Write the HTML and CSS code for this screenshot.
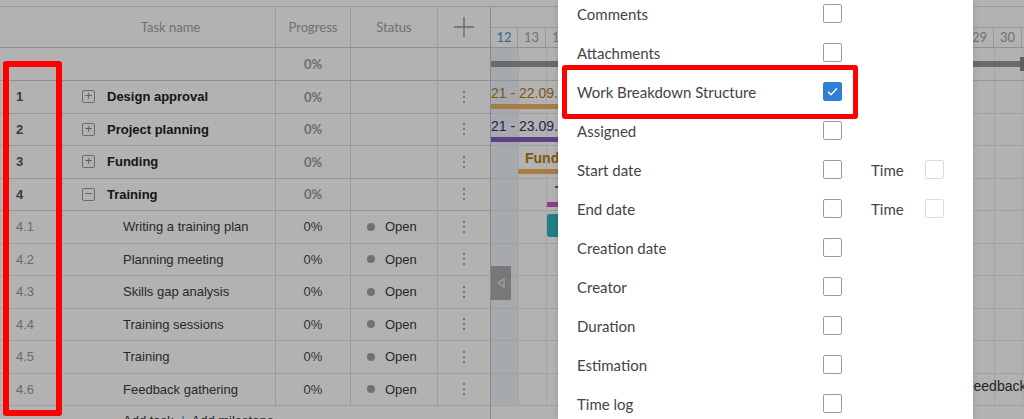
FILE: index.html
```html
<!DOCTYPE html>
<html>
<head>
    <title>Project - Gantt</title>
    <link rel="stylesheet" href="styles.css">
</head>
<body>
<div class="app">
    <div class="toolbar"></div>
    <div class="workspace">
        <div class="grid">
            <div class="row head">
                <div></div>
                <div class="cell name-head">Task name</div>
                <div class="cell col">Progress</div>
                <div class="cell col">Status</div>
                <div class="cell col add">
                    <svg width="22" height="22" viewBox="0 0 22 22"><path d="M11 1v20M1 11h20" stroke="#9a9a9a" stroke-width="1.4"/></svg>
                </div>
            </div>
            <div class="row summary">
                <div></div>
                <div></div>
                <div class="cell col pct strong">0%</div>
                <div class="cell col"></div>
                <div class="cell col"></div>
            </div>

            <div class="row parent">
                <div class="cell num">1</div>
                <div class="cell name"><span class="toggle">+</span>Design approval</div>
                <div class="cell col pct strong">0%</div>
                <div class="cell col"></div>
                <div class="cell col more"><i></i><i></i><i></i></div>
            </div>
            <div class="row parent">
                <div class="cell num">2</div>
                <div class="cell name"><span class="toggle">+</span>Project planning</div>
                <div class="cell col pct strong">0%</div>
                <div class="cell col"></div>
                <div class="cell col more"><i></i><i></i><i></i></div>
            </div>
            <div class="row parent">
                <div class="cell num">3</div>
                <div class="cell name"><span class="toggle">+</span>Funding</div>
                <div class="cell col pct strong">0%</div>
                <div class="cell col"></div>
                <div class="cell col more"><i></i><i></i><i></i></div>
            </div>
            <div class="row parent">
                <div class="cell num">4</div>
                <div class="cell name"><span class="toggle">&minus;</span>Training</div>
                <div class="cell col pct strong">0%</div>
                <div class="cell col"></div>
                <div class="cell col more"><i></i><i></i><i></i></div>
            </div>
            <div class="row">
                <div class="cell num">4.1</div>
                <div class="cell name sub">Writing a training plan</div>
                <div class="cell col pct">0%</div>
                <div class="cell col status"><b></b>Open</div>
                <div class="cell col more"><i></i><i></i><i></i></div>
            </div>
            <div class="row">
                <div class="cell num">4.2</div>
                <div class="cell name sub">Planning meeting</div>
                <div class="cell col pct">0%</div>
                <div class="cell col status"><b></b>Open</div>
                <div class="cell col more"><i></i><i></i><i></i></div>
            </div>
            <div class="row">
                <div class="cell num">4.3</div>
                <div class="cell name sub">Skills gap analysis</div>
                <div class="cell col pct">0%</div>
                <div class="cell col status"><b></b>Open</div>
                <div class="cell col more"><i></i><i></i><i></i></div>
            </div>
            <div class="row">
                <div class="cell num">4.4</div>
                <div class="cell name sub">Training sessions</div>
                <div class="cell col pct">0%</div>
                <div class="cell col status"><b></b>Open</div>
                <div class="cell col more"><i></i><i></i><i></i></div>
            </div>
            <div class="row">
                <div class="cell num">4.5</div>
                <div class="cell name sub">Training</div>
                <div class="cell col pct">0%</div>
                <div class="cell col status"><b></b>Open</div>
                <div class="cell col more"><i></i><i></i><i></i></div>
            </div>
            <div class="row">
                <div class="cell num">4.6</div>
                <div class="cell name sub">Feedback gathering</div>
                <div class="cell col pct">0%</div>
                <div class="cell col status"><b></b>Open</div>
                <div class="cell col more"><i></i><i></i><i></i></div>
            </div>
            <div class="add-row">Add task <span class="sep">|</span> Add milestone</div>
        </div>

        <div class="chart">
            <div class="chart-head">
                <div class="month"></div>
                <div class="days">
                    <span class="today">12</span><span>13</span><span>14</span><span>15</span><span>16</span>
                    <span>17</span><span>18</span><span>19</span><span>20</span><span>21</span>
                    <span>22</span><span>23</span><span>24</span><span>25</span><span>26</span>
                    <span>27</span><span>28</span><span>29</span><span>30</span>
                </div>
            </div>
            <div class="chart-body">
                <div class="lane summary-lane">
                    <div class="bar project" style="left:0;width:529px"></div>
                    <div class="cap" style="left:529px"></div>
                </div>
                <div class="lane">
                    <span class="label orange-text" style="left:0">21 - 22.09.2021</span>
                    <div class="bar thin orange" style="left:0;width:120px"></div>
                </div>
                <div class="lane">
                    <span class="label navy-text" style="left:0">21 - 23.09.2021</span>
                    <div class="bar thin purple" style="left:0;width:140px"></div>
                </div>
                <div class="lane">
                    <span class="label bold orange-text" style="left:34px">Funding</span>
                    <div class="bar thin orange" style="left:27px;width:110px"></div>
                </div>
                <div class="lane">
                    <span class="label bold red-text" style="left:64px">Training</span>
                    <div class="bar thin magenta" style="left:56px;width:160px"></div>
                </div>
                <div class="lane">
                    <div class="bar task teal" style="left:56px;width:56px"></div>
                </div>
                <div class="lane"></div>
                <div class="lane"></div>
                <div class="lane"></div>
                <div class="lane"></div>
                <div class="lane">
                    <span class="label dark-text" style="left:474px">Feedback gathering</span>
                </div>
            </div>
        </div>
    </div>

    <div class="collapse">
        <svg width="8" height="10" viewBox="0 0 8 10"><path d="M7 1L1 5l6 4z" fill="none" stroke="#eee" stroke-width="1.1"/></svg>
    </div>

    <div class="dim"></div>

    <div class="panel">
        <div class="opt"><span class="opt-label">Comments</span><span class="box"></span></div>
        <div class="opt"><span class="opt-label">Attachments</span><span class="box"></span></div>
        <div class="opt"><span class="opt-label">Work Breakdown Structure</span>
            <span class="box checked">
                <svg width="19" height="19" viewBox="0 0 19 19"><path d="M5 9.8l3 3 6-6.6" fill="none" stroke="#fff" stroke-width="1.4"/></svg>
            </span>
        </div>
        <div class="opt"><span class="opt-label">Assigned</span><span class="box"></span></div>
        <div class="opt"><span class="opt-label">Start date</span><span class="box"></span><span class="time">Time</span><span class="box off"></span></div>
        <div class="opt"><span class="opt-label">End date</span><span class="box"></span><span class="time">Time</span><span class="box off"></span></div>
        <div class="opt"><span class="opt-label">Creation date</span><span class="box"></span></div>
        <div class="opt"><span class="opt-label">Creator</span><span class="box"></span></div>
        <div class="opt"><span class="opt-label">Duration</span><span class="box"></span></div>
        <div class="opt"><span class="opt-label">Estimation</span><span class="box"></span></div>
        <div class="opt"><span class="opt-label">Time log</span><span class="box"></span></div>
    </div>

    <div class="mark mark-num"></div>
    <div class="mark mark-wbs"></div>
</div>
</body>
</html>
```

FILE: styles.css
```css
* {
    box-sizing: border-box;
}

body {
    margin: 0;
    font-family: "Liberation Sans", Arial, sans-serif;
    font-size: 13px;
    color: #333;
    background-color: #fff;
}

.app {
    position: relative;
    width: 1024px;
    height: 419px;
    overflow: hidden;
}

.toolbar {
    height: 7px;
    border-bottom: 1px solid #dcdcdc;
}

.workspace {
    display: flex;
}

/* left task grid */
.grid {
    width: 491px;
    flex: none;
    border-right: 1px solid #c4c4c4;
}

.row {
    display: grid;
    grid-template-columns: 62px 213px 75px 87px 53px;
    height: 32.5px;
    border-bottom: 1px solid #e3e3e3;
}

.row.head {
    height: 41px;
    border-bottom: 1px solid #cfcfcf;
    font-family: Lato, sans-serif;
    color: #a2a2a2;
}

.row.summary {
    height: 33px;
    border-bottom: 1px solid #cfcfcf;
}

.row.parent {
    border-bottom-color: #d6d6d6;
}

.cell {
    display: flex;
    align-items: center;
    min-width: 0;
    white-space: nowrap;
}

.col {
    justify-content: center;
    border-left: 1px solid #e0e0e0;
}

.name-head {
    justify-content: center;
    padding-left: 4px;
}

.num {
    padding-left: 16px;
    color: #9a9a9a;
}

.parent .num {
    color: #555;
    font-weight: bold;
}

.name {
    padding-left: 20px;
    color: #3a3a3a;
}

.parent .name {
    font-weight: bold;
    color: #222;
}

.name.sub {
    padding-left: 61px;
}

.toggle {
    width: 13px;
    height: 13px;
    margin-right: 12px;
    border: 1px solid #9a9a9a;
    border-radius: 2px;
    color: #8a8a8a;
    font-weight: normal;
    font-size: 13px;
    line-height: 10px;
    text-align: center;
}

.pct {
    color: #4a4a4a;
}

.pct.strong {
    font-family: Lato, sans-serif;
    font-weight: bold;
    color: #9c9c9c;
}

.status {
    justify-content: flex-start;
    padding-left: 16px;
    color: #3a3a3a;
}

.status b {
    width: 8px;
    height: 8px;
    margin-right: 10px;
    border-radius: 50%;
    background-color: #a3a3a3;
}

.more {
    flex-direction: column;
    gap: 3px;
}

.more i {
    width: 2px;
    height: 2px;
    border-radius: 50%;
    background-color: #8a8a8a;
}

.add-row {
    padding: 7px 0 0 123px;
    color: #333;
}

.add-row .sep {
    color: #4a90e2;
    padding: 0 4px;
}

/* timeline */
.chart {
    flex: 1;
    min-width: 0;
    overflow: hidden;
}

.chart-head {
    height: 41px;
    border-bottom: 1px solid #cfcfcf;
}

.month {
    height: 21px;
    border-bottom: 1px solid #dcdcdc;
}

.days {
    display: flex;
    height: 19px;
    font-family: Lato, sans-serif;
    color: #a2a2a2;
}

.days span {
    flex: none;
    width: 28px;
    border-right: 1px solid #dcdcdc;
    text-align: center;
    line-height: 19px;
}

.days span:first-child {
    width: 27px;
}

.days .today {
    color: #4a8fdc;
}

.chart-body {
    background-image:
        linear-gradient(to right, #eef3f9 0, #eef3f9 27px, transparent 27px),
        repeating-linear-gradient(to right, transparent 0, transparent 27px, #ececec 27px, #ececec 28px);
}

.lane {
    position: relative;
    height: 32.5px;
    border-bottom: 1px solid #e6e6e6;
}

.summary-lane {
    height: 33px;
    border-bottom-color: #d6d6d6;
}

.bar {
    position: absolute;
}

.bar.project {
    top: 13px;
    height: 6px;
    background-color: #989898;
}

.cap {
    position: absolute;
    top: 9px;
    width: 5px;
    height: 14px;
    background-color: #8a8a8a;
}

.bar.thin {
    top: 23px;
    height: 5px;
}

.bar.task {
    top: 3px;
    height: 23px;
    border-radius: 3px;
}

.orange {
    background-color: #f1b262;
}

.purple {
    background-color: #8a5cc0;
}

.magenta {
    background-color: #c45cb5;
}

.teal {
    background-color: #33b3bf;
}

.label {
    position: absolute;
    top: 4px;
    line-height: 16px;
    font-size: 14px;
    white-space: nowrap;
}

.label.bold {
    font-weight: bold;
}

.orange-text {
    color: #b57a1c;
}

.navy-text {
    color: #2c3a66;
}

.red-text {
    color: #9b2a3c;
}

.dark-text {
    color: #333;
}

.collapse {
    position: absolute;
    left: 491px;
    top: 266px;
    width: 20px;
    height: 34px;
    display: flex;
    align-items: center;
    justify-content: center;
    background-color: #adadad;
}

/* modal backdrop */
.dim {
    position: absolute;
    inset: 0;
    background-color: rgba(0, 0, 0, 0.3);
}

/* columns dropdown */
.panel {
    position: absolute;
    left: 558px;
    top: 0;
    width: 415px;
    height: 419px;
    padding: 0 0 0 19px;
    background-color: #fff;
    font-family: Lato, sans-serif;
    font-size: 15px;
    color: #444;
    box-shadow: 0 0 6px rgba(0, 0, 0, 0.15);
}

.opt {
    display: flex;
    align-items: center;
    height: 39px;
}

.opt:first-child {
    margin-top: -6px;
}

.opt-label {
    width: 246px;
}

.box {
    width: 19px;
    height: 19px;
    border: 1px solid #9c9c9c;
    border-radius: 2px;
}

.box.checked {
    border-color: #2f80d3;
    background-color: #2f80d3;
}

.box.checked svg {
    display: block;
    margin: -1px;
}

.box.off {
    border-color: #dcdcdc;
}

.time {
    width: 54px;
    margin-left: 29px;
}

/* red highlight marks */
.mark {
    position: absolute;
    border: 6px solid #ff0000;
    border-radius: 3px;
}

.mark-num {
    left: 3px;
    top: 61px;
    width: 59px;
    height: 355px;
}

.mark-wbs {
    left: 562px;
    top: 65px;
    width: 296px;
    height: 54px;
    border-width: 5px;
}
```
